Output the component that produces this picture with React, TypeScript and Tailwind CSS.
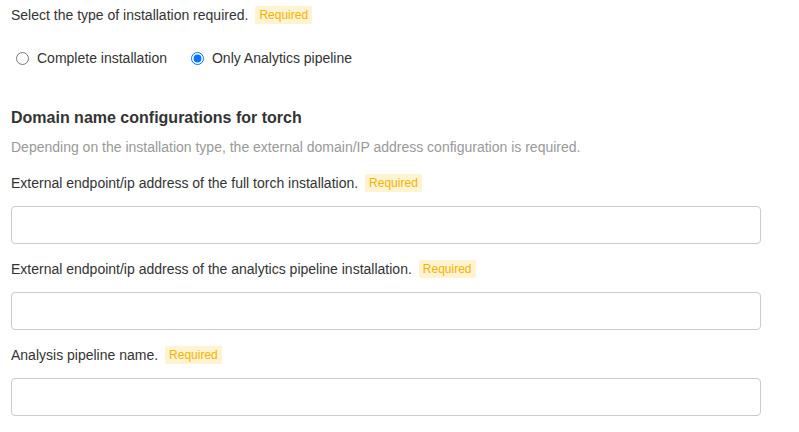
import React from 'react'

function RequiredTag() {
  return <span className="ml-[7px] rounded-[2px] bg-[#fff3d1] px-[4px] py-[2px] text-[12px] leading-[14px] text-[#f4b400]">Required</span>
}

function Field({ label }: { label: string }) {
  return (
    <div className="flex flex-col">
      <div className="flex h-[18px] items-center">
        <span>{label}</span>
        <RequiredTag />
      </div>
      <input type="text" className="mt-[14px] h-[38px] w-[750px] rounded-[4px] border border-[#c9cbcf] bg-white px-3 outline-none" />
    </div>
  )
}

export default function App() {
  return (
    <div className="min-h-screen bg-white px-[11px] pt-[6px] text-[14px] text-[#333] [font-family:'Liberation_Sans',Arial,sans-serif]">
      <div className="flex h-[18px] items-center">
        <span>Select the type of installation required.</span>
        <RequiredTag />
      </div>
      <div className="mt-[24px] flex items-center gap-[24px] pl-[5px]">
        <label className="flex items-center gap-[8px]">
          <input type="radio" name="install" className="m-0 h-[13px] w-[13px]" />
          <span>Complete installation</span>
        </label>
        <label className="flex items-center gap-[8px]">
          <input type="radio" name="install" defaultChecked className="m-0 h-[13px] w-[13px]" />
          <span>Only Analytics pipeline</span>
        </label>
      </div>
      <h2 className="mt-[40px] text-[16px] font-bold leading-[18px] text-[#333]">Domain name configurations for torch</h2>
      <p className="mt-[11px] leading-[18px] text-[#999]">
        Depending on the installation type, the external domain/IP address configuration is required.
      </p>
      <div className="mt-[18px] flex flex-col gap-[16px]">
        <Field label="External endpoint/ip address of the full torch installation." />
        <Field label="External endpoint/ip address of the analytics pipeline installation." />
        <Field label="Analysis pipeline name." />
      </div>
    </div>
  )
}
